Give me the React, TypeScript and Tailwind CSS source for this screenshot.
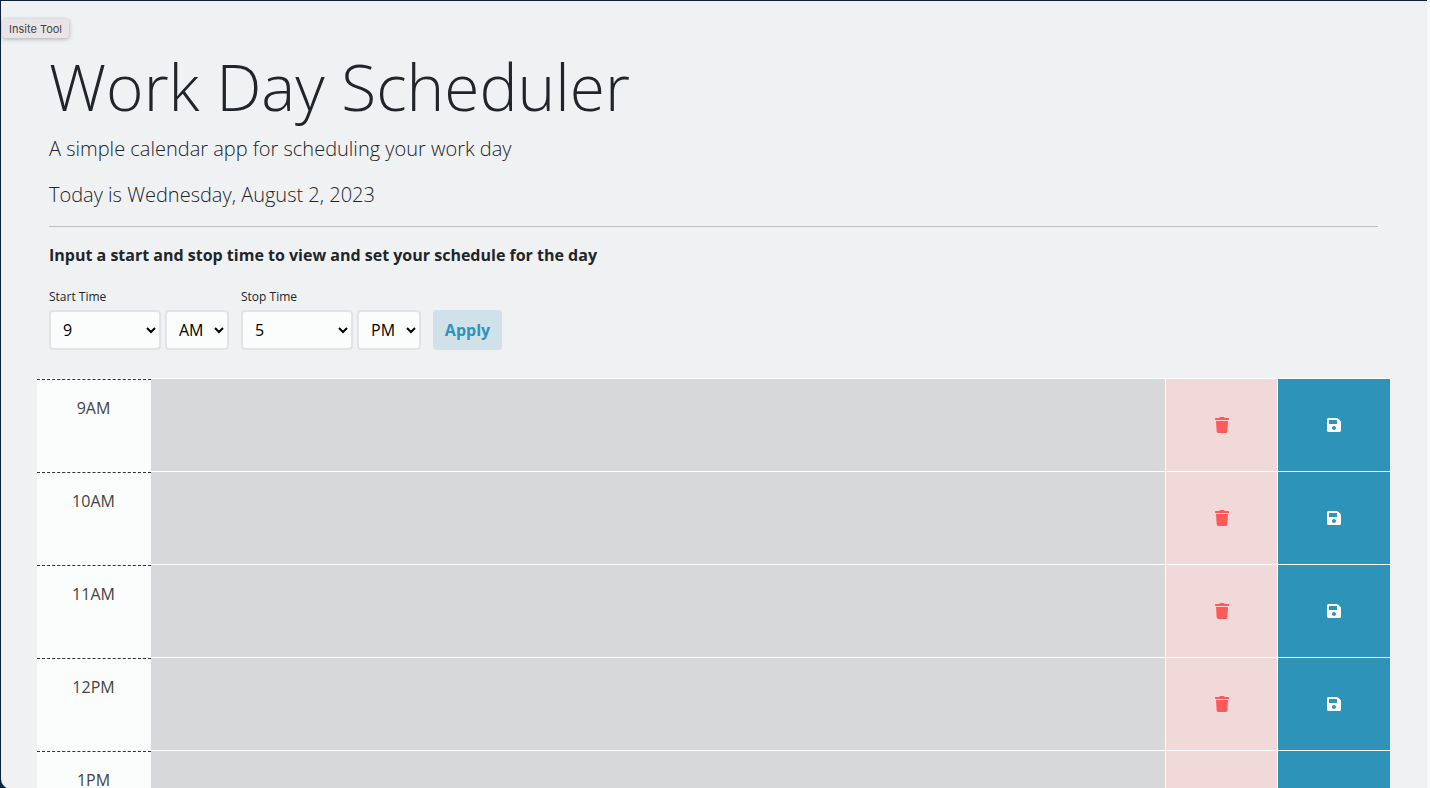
import { FaSave, FaTrash } from "react-icons/fa";

const hours = ["9AM", "10AM", "11AM", "12PM", "1PM"];

function TimeSelect({ label, value, meridian, options }: { label: string; value: string; meridian: string; options: string[] }) {
    return (
        <div className="flex flex-col">
            <label className="text-[12px] leading-[18px] text-[#212529] mb-[4px]">{label}</label>
            <div className="flex gap-[4px]">
                <select defaultValue={value} className="w-[112px] h-[40px] pl-[8px] text-[16px] bg-[#fbfdfc] text-black border-2 border-[#e2e3e4] rounded-[4px]">
                    {options.map((option) => <option key={option}>{option}</option>)}
                </select>
                <select defaultValue={meridian} className="w-[64px] h-[40px] pl-[8px] text-[16px] bg-[#fbfdfc] text-black border-2 border-[#e2e3e4] rounded-[4px]">
                    <option>AM</option>
                    <option>PM</option>
                </select>
            </div>
        </div>
    );
}

function HourRow({ hour }: { hour: string }) {
    return (
        <div className="flex h-[93px] shrink-0">
            <div className="w-[114px] shrink-0 bg-[#fbfdfc] pt-px">
                <div className="h-full border-t border-dashed border-[#333] text-center text-[16px] leading-[24px] pt-[16px] pr-px text-[#444]">{hour}</div>
            </div>
            <div className="flex-1 bg-[#d7d8da] border-t border-white"></div>
            <div className="w-[112px] shrink-0 flex items-center justify-center bg-[#f2d9d9] border-t border-l border-white text-[#ff5a5a]">
                <FaTrash className="w-[16px] h-[16px]" />
            </div>
            <div className="w-[113px] shrink-0 flex items-center justify-center bg-[#2e93b9] border-t border-l border-white text-white">
                <FaSave className="w-[16px] h-[16px]" />
            </div>
        </div>
    );
}

export default function App() {
    const numbers = ["1", "2", "3", "4", "5", "6", "7", "8", "9", "10", "11", "12"];

    return (
        <div className="relative h-screen overflow-hidden bg-[#0b2238] font-['Open_Sans',sans-serif]">
            <div className="h-full ml-px mt-px mr-[3px] bg-[#f0f1f3] rounded-bl-[10px] overflow-hidden">
                <div className="pl-[36px] pr-[37px]">
                    <div className="px-[12px]">
                        <h1 className="text-[64px] leading-[77px] font-light text-[#212529] pt-[47px]">Work Day Scheduler</h1>
                        <p className="text-[20px] leading-[30px] font-light text-[#212529] mt-[9px]">A simple calendar app for scheduling your work day</p>
                        <p className="text-[20px] leading-[30px] font-light text-[#212529] mt-[16px]">Today is Wednesday, August 2, 2023</p>
                        <hr className="border-t border-[#bcbdbf] mt-[16px]" />
                        <p className="text-[16px] leading-[24px] font-bold text-[#212529] mt-[16px]">Input a start and stop time to view and set your schedule for the day</p>
                        <div className="flex items-end gap-[12px] mt-[21px]">
                            <TimeSelect label="Start Time" value="9" meridian="AM" options={numbers} />
                            <TimeSelect label="Stop Time" value="5" meridian="PM" options={numbers} />
                            <button className="w-[69px] h-[40px] bg-[#d1e1e9] text-[#2e93b9] text-[16px] font-bold rounded-[4px]">Apply</button>
                        </div>
                    </div>
                    <div className="flex flex-col mt-[28px]">
                        {hours.map((hour) => <HourRow key={hour} hour={hour} />)}
                    </div>
                </div>
            </div>
            <div className="absolute top-0 right-0 bottom-0 w-[3px] bg-[#f7f8f9]"></div>
            <div className="absolute top-[19px] left-[2px] w-[67px] h-[19px] rounded-[3px] bg-[#e8e4e8] shadow-[0_1px_4px_rgba(0,0,0,0.3)] text-[11px] leading-[20px] text-center text-[#444] font-['Inter',sans-serif]">Insite Tool</div>
        </div>
    );
}
